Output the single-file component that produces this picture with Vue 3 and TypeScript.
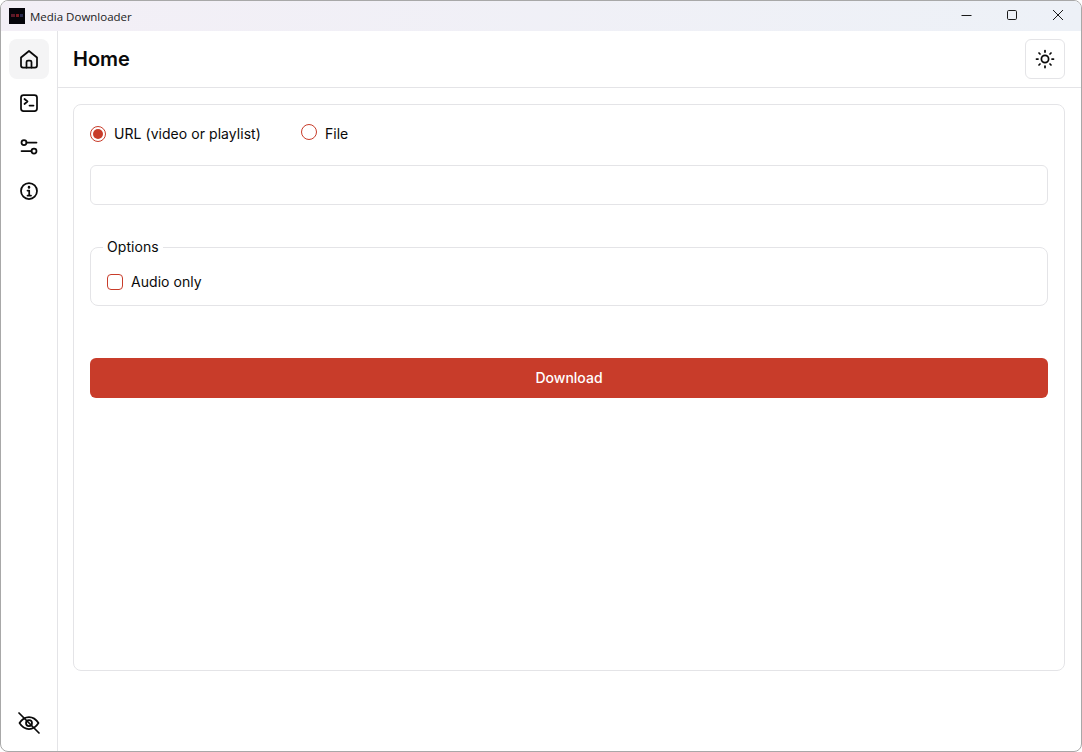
<script setup lang="ts">
import { ref } from 'vue';

const mode = ref<'url' | 'file'>('url');
const audioOnly = ref(false);
const url = ref('');
</script>

<template>
  <div class="window">
    <div class="titlebar">
      <svg class="app-logo" viewBox="0 0 16 16">
        <rect width="16" height="16" fill="#05040a" />
        <rect x="2" y="6" width="4" height="3" fill="#5a1a2a" />
        <rect x="7" y="6" width="3" height="3" fill="#7a1a20" />
        <rect x="11" y="6" width="3" height="3" fill="#2a2a50" />
      </svg>
      <span class="app-title">Media Downloader</span>
      <div class="win-controls">
        <button class="win-btn">
          <svg width="12" height="12" viewBox="0 0 12 12"><path d="M1.500 5.500h10" stroke="#1a1a1a" fill="none" /></svg>
        </button>
        <button class="win-btn">
          <svg width="12" height="12" viewBox="0 0 12 12"><rect x="1.500" y="0.500" width="9" height="9" rx="1.200" stroke="#1a1a1a" fill="none" /></svg>
        </button>
        <button class="win-btn">
          <svg width="12" height="12" viewBox="0 0 12 12"><path d="M1 0l10 10M11 0L1 10" stroke="#1a1a1a" fill="none" /></svg>
        </button>
      </div>
    </div>

    <div class="body">
      <nav class="sidebar">
        <button class="nav-btn active">
          <svg viewBox="0 0 24 24"><path d="M4 10.500 12 4l8 6.500V18.500a2 2 0 0 1-2 2H6a2 2 0 0 1-2-2z" /><path d="M9.500 20.500V15a1.500 1.500 0 0 1 1.500-1.500h2a1.500 1.500 0 0 1 1.500 1.500v5.500" /></svg>
        </button>
        <button class="nav-btn">
          <svg viewBox="0 0 24 24"><rect x="4" y="4" width="16" height="16" rx="2.500" /><path d="m7.500 8 3 2.500-3 2.500M12.500 14.500h4" /></svg>
        </button>
        <button class="nav-btn">
          <svg viewBox="0 0 24 24"><circle cx="7" cy="7.500" r="2.500" /><path d="M9.500 7.500H19.500M4.500 16h10" /><circle cx="17" cy="16" r="2.500" /></svg>
        </button>
        <button class="nav-btn">
          <svg viewBox="0 0 24 24"><circle cx="12" cy="12" r="8" /><path class="thick" d="M12 8v.500" /><path d="M10.500 11.500H12.200v5M10.500 16.500h3.500" /></svg>
        </button>
        <button class="nav-btn bottom">
          <svg viewBox="0 0 24 24"><path d="M2.500 12C5 8 8.300 6 12 6s7 2 9.500 6c-2.500 4-5.800 6-9.500 6s-7-2-9.500-6z" /><circle cx="12" cy="12" r="3" /><path d="M2 2l20 20" /></svg>
        </button>
      </nav>

      <main class="main">
        <header class="page-header">
          <h1>Home</h1>
          <button class="theme-btn">
            <svg viewBox="0 0 24 24"><circle cx="12" cy="12" r="3.600" /><path d="M12 3.500v1.500M12 19v1.500M3.500 12H5M19 12h1.500M6 6l1 1M17 17l1 1M6 18l1-1M17 7l1-1" /></svg>
          </button>
        </header>

        <div class="content">
          <section class="card">
            <div class="radio-row">
              <label class="radio" :class="{ on: mode === 'url' }">
                <input v-model="mode" type="radio" value="url" />
                <span class="radio-dot"></span>
                URL (video or playlist)
              </label>
              <label class="radio file" :class="{ on: mode === 'file' }">
                <input v-model="mode" type="radio" value="file" />
                <span class="radio-dot"></span>
                File
              </label>
            </div>

            <input v-model="url" class="url-input" type="text" />

            <fieldset class="options">
              <legend>Options</legend>
              <label class="check">
                <input v-model="audioOnly" type="checkbox" />
                <span class="check-box"></span>
                Audio only
              </label>
            </fieldset>

            <button class="download">Download</button>
          </section>
        </div>
      </main>
    </div>
  </div>
</template>

<style>
html, body {
  margin: 0;
  background: #fff;
}
</style>

<style scoped>
* {
  box-sizing: border-box;
}

.window {
  width: 1082px;
  height: 752px;
  display: flex;
  flex-direction: column;
  overflow: hidden;
  background: #fff;
  border: 1px solid #a8a8a8;
  border-radius: 8px;
  font-family: Inter, "Liberation Sans", sans-serif;
  color: #0a0a0a;
}

.titlebar {
  height: 30px;
  flex: none;
  display: flex;
  align-items: center;
  padding-left: 8px;
  background: linear-gradient(90deg, #f3eff6, #edf1f7);
}

.app-logo {
  width: 16px;
  height: 16px;
}

.app-title {
  margin-left: 5px;
  font-family: "Open Sans", "Liberation Sans", sans-serif;
  font-size: 11.500px;
  color: #1c1c1c;
}

.win-controls {
  margin-left: auto;
  display: flex;
}

.win-btn {
  width: 46px;
  height: 30px;
  display: flex;
  align-items: center;
  justify-content: center;
  border: none;
  background: transparent;
  padding: 0;
}

.body {
  flex: 1;
  display: flex;
  min-height: 0;
}

.sidebar {
  width: 57px;
  flex: none;
  display: flex;
  flex-direction: column;
  align-items: center;
  padding: 8px 0 8px;
  border-right: 1px solid #e4e4e7;
  gap: 4px;
}

.nav-btn {
  width: 40px;
  height: 40px;
  display: flex;
  align-items: center;
  justify-content: center;
  border: none;
  border-radius: 8px;
  background: transparent;
  padding: 0;
  margin-left: -1px;
}

.nav-btn.active {
  background: #f4f4f5;
}

.nav-btn.bottom {
  margin-top: auto;
}

.nav-btn svg {
  width: 24px;
  height: 24px;
  fill: none;
  stroke: #0a0a0a;
  stroke-width: 1.750;
  stroke-linecap: round;
  stroke-linejoin: round;
}

.nav-btn svg .thick {
  stroke-width: 2.500;
}

.main {
  flex: 1;
  min-width: 0;
  display: flex;
  flex-direction: column;
}

.page-header {
  height: 57px;
  flex: none;
  display: flex;
  align-items: center;
  justify-content: space-between;
  padding: 0 16px 0 15px;
  border-bottom: 1px solid #e4e4e7;
}

.page-header h1 {
  margin: 0;
  font-size: 20px;
  line-height: 28px;
  font-weight: 600;
}

.theme-btn {
  width: 40px;
  height: 40px;
  display: flex;
  align-items: center;
  justify-content: center;
  border: 1px solid #e4e4e7;
  border-radius: 6px;
  background: #fff;
  padding: 0;
}

.theme-btn svg {
  width: 24px;
  height: 24px;
  fill: none;
  stroke: #0a0a0a;
  stroke-width: 1.750;
  stroke-linecap: round;
}

.content {
  flex: 1;
  min-height: 0;
  padding: 16px 16px 80px 15px;
}

.card {
  height: 567px;
  display: flex;
  flex-direction: column;
  align-items: stretch;
  padding: 16px;
  border: 1px solid #e4e4e7;
  border-radius: 8px;
}

.radio-row {
  display: flex;
  gap: 40px;
  height: 26px;
  align-items: center;
}

.radio,
.check {
  display: inline-flex;
  align-items: center;
  font-size: 14px;
  line-height: 20px;
  font-weight: 400;
  letter-spacing: 0.05px;
  position: relative;
}

.radio input,
.check input {
  position: absolute;
  opacity: 0;
  width: 0;
  height: 0;
}

.radio-dot {
  width: 16px;
  height: 16px;
  margin-right: 8px;
  border: 1px solid #c83c2a;
  border-radius: 50%;
  display: flex;
  align-items: center;
  justify-content: center;
}

/* the file radio sits a bit higher than its label in the original */
.radio.file .radio-dot {
  transform: translateY(-2px);
}

.radio.on .radio-dot::after {
  content: "";
  width: 10px;
  height: 10px;
  border-radius: 50%;
  background: #c83c2a;
}

.url-input {
  height: 40px;
  margin-top: 18px;
  border: 1px solid #e4e4e7;
  border-radius: 6px;
  padding: 0 12px;
  outline: none;
  background: #fff;
}

.options {
  margin: 32px 0 0;
  height: 69px;
  border: 1px solid #e4e4e7;
  border-radius: 8px;
  padding: 15px 16px 0;
  min-width: 0;
}

.options legend {
  padding: 0 4px;
  margin-left: -4px;
  font-size: 14px;
  line-height: 20px;
  font-weight: 400;
  letter-spacing: 0.05px;
}

.check-box {
  width: 16px;
  height: 16px;
  margin-right: 8px;
  border: 1px solid #c83c2a;
  border-radius: 4px;
}

.download {
  height: 40px;
  margin-top: 52px;
  padding: 0 0 2px;
  border: none;
  border-radius: 6px;
  background: #c83c2a;
  color: #fff;
  font-family: inherit;
  font-size: 14px;
  font-weight: 500;
}
</style>
